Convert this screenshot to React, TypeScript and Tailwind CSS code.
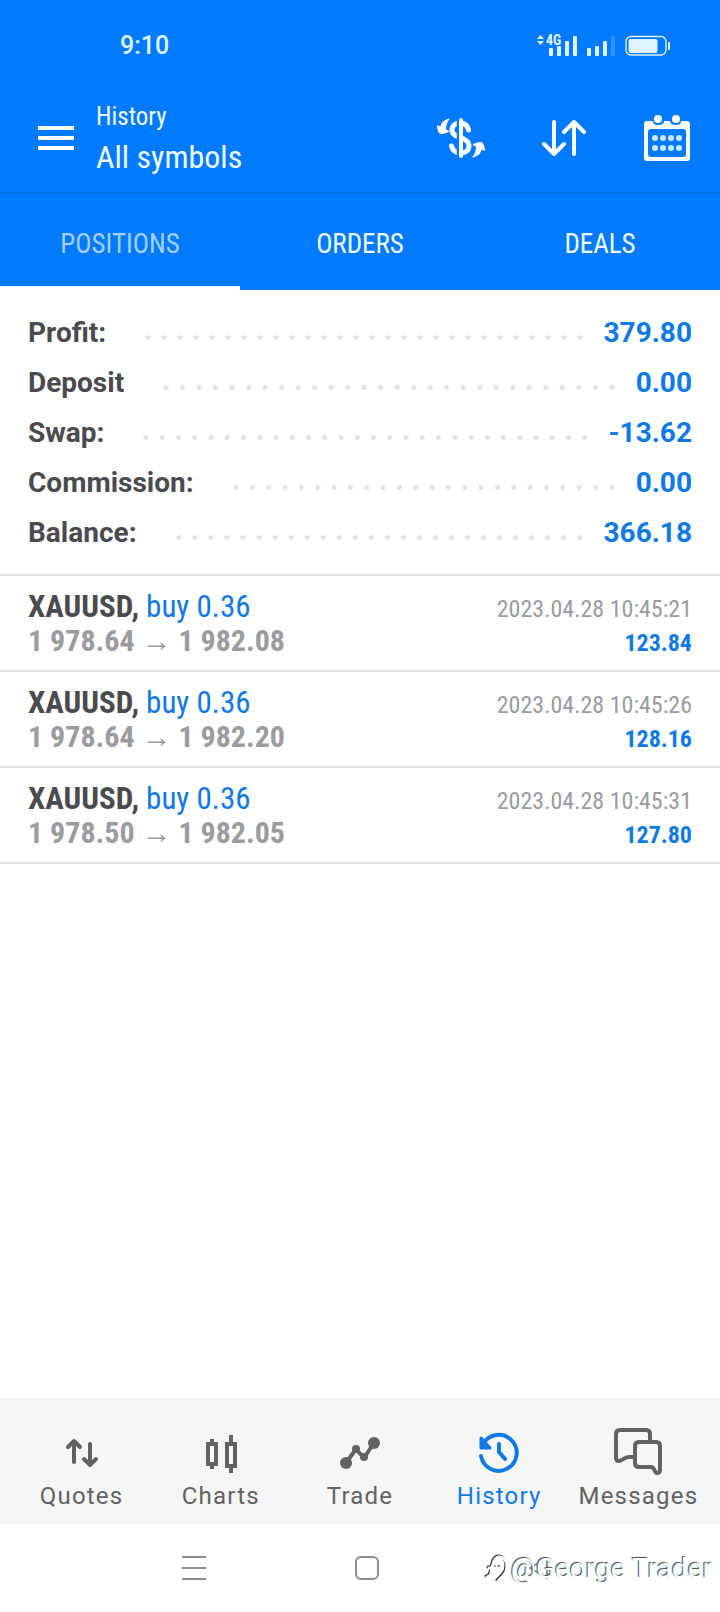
const condensed = "font-['Roboto_Condensed','Roboto',sans-serif]";

const summary = [
  { label: "Profit:", value: "379.80" },
  { label: "Deposit", value: "0.00" },
  { label: "Swap:", value: "-13.62" },
  { label: "Commission:", value: "0.00" },
  { label: "Balance:", value: "366.18" },
];

const positions = [
  { open: "1 978.64", close: "1 982.08", time: "2023.04.28 10:45:21", profit: "123.84" },
  { open: "1 978.64", close: "1 982.20", time: "2023.04.28 10:45:26", profit: "128.16" },
  { open: "1 978.50", close: "1 982.05", time: "2023.04.28 10:45:31", profit: "127.80" },
];

const StatusBar = () => (
  <div className="flex h-[92px] items-center justify-between pl-[120px] pr-[49px] text-[#e0f4ff]">
    <span className="font-['Roboto',sans-serif] text-[25px] font-medium">9:10</span>
    <svg viewBox="0 -4 134 32" className="h-8 w-[134px]" fill="currentColor" aria-hidden="true">
      <path d="M0 5 3.500 1 7 5zM0 7 3.500 11 7 7z" />
      <text x="9" y="11" fontSize="14" fontWeight="700" fontFamily="Roboto Condensed, Roboto, sans-serif">4G</text>
      <rect x="12" y="14" width="4" height="8" rx="1" />
      <rect x="20" y="12" width="4" height="10" rx="1" />
      <rect x="28" y="7" width="4" height="15" rx="1" />
      <rect x="36" y="2" width="4" height="20" rx="1" />
      <rect x="50" y="14" width="4" height="8" rx="1" />
      <rect x="58" y="12" width="4" height="10" rx="1" />
      <rect x="66" y="7" width="4" height="15" rx="1" />
      <rect x="74" y="2" width="4" height="20" rx="1" opacity=".2" />
      <rect x="89" y="2.500" width="40" height="18.500" rx="5" fill="none" stroke="currentColor" strokeWidth="1.400" />
      <rect x="91.500" y="5" width="29" height="14" rx="2" />
      <rect x="131" y="8" width="2" height="8" rx="1" />
    </svg>
  </div>
);

const Header = () => (
  <header className="flex h-[102px] items-center border-b-2 border-[#006fe6] pb-2 pl-[38px] pr-[30px]">
    <button type="button" aria-label="Menu" className="flex w-9 flex-col gap-1.5">
      <span className="h-1 bg-white" />
      <span className="h-1 bg-white" />
      <span className="h-1 bg-white" />
    </button>
    <div className={`ml-[22px] flex-1 pb-0.5 ${condensed}`}>
      <p className="text-[25px] leading-10">History</p>
      <h1 className="text-[32px] leading-10">All symbols</h1>
    </div>
    <div className="flex items-center gap-[56px] text-white">
      <button type="button" aria-label="Filter by symbol">
        <svg viewBox="0 0 50 50" className="size-[50px]" fill="none" stroke="currentColor" strokeWidth="5" strokeLinecap="round">
          <path d="M32.500 17c-1-4.500-4-7-8.500-7-4.500 0-8 2.500-8 7 0 4.500 4 6 8.500 7.500 4.500 1.500 8.500 3.500 8.500 8.500 0 4.500-3.500 7-8 7-5 0-8.500-2.500-9.500-7" />
          <path d="M22 5v40" stroke="#007aff" strokeWidth="2.500" strokeLinecap="butt" />
          <path d="M25 7v36" strokeWidth="4" />
          <path
            d="M14 5.500C8.500 6 5 9.500 4.500 13.500L1 12C1 17 3 21 5 21 8 21 12 20 13.500 18L10 16.500C10 12 11.500 8.500 14 5.500ZM36 44.500C41.500 44 45 40.500 45.500 36.500L49 38C49 33 47 29 45 29 42 29 38 30 36.500 32L40 33.500C40 38 38.500 41.500 36 44.500Z"
            fill="currentColor"
            stroke="none"
          />
        </svg>
      </button>
      <button type="button" aria-label="Sort">
        <svg viewBox="0 0 46 38" className="h-[38px] w-[46px]" fill="none" stroke="currentColor" strokeWidth="4" strokeLinecap="round" strokeLinejoin="round">
          <path d="M12 3v32M2 25l10 10 10-10M32 35V3M22 13 32 3l10 10" />
        </svg>
      </button>
      <button type="button" aria-label="Period">
        <svg viewBox="0 0 46 46" className="size-[46px]" fill="currentColor">
          <path fillRule="evenodd" d="M3 6h6c0 3 2 4 5 4s6-1 6-4h6c0 3 3 4 6 4s5-1 5-4h6q3 0 3 3v34q0 3-3 3H3q-3 0-3-3V9q0-3 3-3Zm4 8q-3 0-3 3v22q0 3 3 3h32q3 0 3-3V17q0-3-3-3Z" />
          <circle cx="14" cy="4" r="4" />
          <circle cx="32" cy="4" r="4" />
          <g className="text-[#c8e9ff]">
            {[11, 19, 27, 35].map((x) => (
              <g key={x}>
                <circle cx={x} cy="23" r="3" />
                <circle cx={x} cy="33" r="3" />
              </g>
            ))}
          </g>
        </svg>
      </button>
    </div>
  </header>
);

const Tabs = () => (
  <nav className={`grid h-24 grid-cols-3 text-[27px] ${condensed}`}>
    <button type="button" className="border-b-4 border-white pt-2 text-[#a6cfff]">POSITIONS</button>
    <button type="button" className="border-b-4 border-transparent pt-2">ORDERS</button>
    <button type="button" className="border-b-4 border-transparent pt-2">DEALS</button>
  </nav>
);

const Summary = () => (
  <dl className="border-b-2 border-[#e2e2e2] px-7 pt-[18px] pb-4 font-['Roboto',sans-serif] text-[28px] font-bold">
    {summary.map((row) => (
      <div key={row.label} className="flex h-[50px] items-center">
        <dt className="text-[#4a4a4f]">{row.label}</dt>
        <dd className="flex flex-1 items-center text-[#0f7ae5]">
          <span className="mt-2 mr-4 ml-[34px] h-[5px] flex-1 bg-[radial-gradient(circle,#e2e2e2_2px,transparent_3px)] bg-[length:16px_5px] bg-repeat-space" />
          {row.value}
        </dd>
      </div>
    ))}
  </dl>
);

const Positions = () => (
  <ul className={condensed}>
    {positions.map((p) => (
      <li key={p.time} className="flex h-24 items-center justify-between border-b-2 border-[#e2e2e2] px-7 pt-0.5">
        <div className="leading-[34px]">
          <p className="text-[31px] text-[#0f7ae5]">
            <b className="text-[#4a4a4f]">XAUUSD,</b> buy 0.36
          </p>
          <p className="text-[30px] font-bold text-[#9b9ba0]">
            {p.open} → {p.close}
          </p>
        </div>
        <div className="pt-1 text-right text-2xl leading-[34px]">
          <p className="text-[#9b9ba0]">{p.time}</p>
          <p className="font-bold text-[#0f7ae5]">{p.profit}</p>
        </div>
      </li>
    ))}
  </ul>
);

const navItems = [
  {
    label: "Quotes",
    icon: <path d="M17 36V16M11 21l6-6 6 6M33 18v20M27 33l6 6 6-6" strokeWidth="4" />,
  },
  {
    label: "Charts",
    icon: <path d="M12 18h8v20h-8zM16 13v4M16 39v4M31 18h8v22h-8zM35 9v8M35 41v6" strokeWidth="4" strokeLinecap="butt" strokeLinejoin="miter" />,
  },
  {
    label: "Trade",
    icon: (
      <>
        <path d="M11 37 21 23l8 9 10-15" strokeWidth="4" />
        <g fill="currentColor" stroke="none">
          <circle cx="11" cy="37" r="6" />
          <circle cx="21" cy="23" r="4" />
          <circle cx="29" cy="31" r="4" />
          <circle cx="39" cy="17" r="6" />
        </g>
      </>
    ),
  },
  {
    label: "History",
    active: true,
    icon: (
      <>
        <path d="M7 30A18 18 0 1 0 9 18M25 18v8l6 7" strokeWidth="4" />
        <path d="M7 12v10h9Z" fill="currentColor" strokeWidth="3" />
      </>
    ),
  },
  {
    label: "Messages",
    icon: <path d="M21 31h-5c-5 0-7 4-10 4q-3 0-3-3V8q0-4 4-4h26q4 0 4 4v8M26 16h17q4 0 4 4v24q0 3-3 3c-3 0-2-6-6-6H26q-4 0-4-4V20q0-4 4-4Z" strokeWidth="4" />,
  },
];

const BottomNav = () => (
  <nav className="grid h-[126px] grid-cols-5 bg-[#f6f6f7] px-3 font-['Roboto',sans-serif] text-2xl tracking-wider">
    {navItems.map((item) => (
      <a
        key={item.label}
        href="#"
        className={`flex flex-col items-center gap-0.5 pt-7 ${item.active ? "text-[#0f7ae5]" : "text-[#626262]"}`}
      >
        <svg viewBox="0 0 50 52" className="h-[52px] w-[50px]" fill="none" stroke="currentColor" strokeLinecap="round" strokeLinejoin="round">
          {item.icon}
        </svg>
        <span className="leading-8">{item.label}</span>
      </a>
    ))}
  </nav>
);

const SystemBar = () => (
  <div className="relative flex h-[88px] items-center justify-between pl-[182px] pr-[169px] text-[#8c8c8c]">
    <button type="button" aria-label="Recent apps">
      <svg viewBox="0 0 24 26" className="h-[26px] w-6" stroke="currentColor" strokeWidth="2">
        <path d="M0 2h24M0 13h24M0 24h24" />
      </svg>
    </button>
    <button type="button" aria-label="Home" className="size-6 rounded-md border-2" />
    <button type="button" aria-label="Back">
      <svg viewBox="0 0 24 24" className="size-6" fill="none" stroke="currentColor" strokeWidth="2" strokeLinejoin="round">
        <path d="M20 2v20L3 12Z" />
      </svg>
    </button>
    <div className="absolute right-2 bottom-[22px] flex items-center gap-0.5 font-['Roboto',sans-serif] text-[28px] text-white [text-shadow:-1px_-1px_1px_#444]">
      <svg viewBox="0 0 24 28" className="h-7 w-6 drop-shadow-[-1px_-1px_0.5px_#333]" fill="none" stroke="currentColor" strokeWidth="3" strokeLinecap="round">
        <path d="M2 22c4 0 4-4 5-9s2-10 7-11c5 0 8 4 8 9 0 7-4 10-9 15M4 13h7" />
        <circle cx="15" cy="12" r="1" fill="currentColor" stroke="none" />
      </svg>
      @George Trader
    </div>
  </div>
);

const App = () => (
  <div className="flex min-h-screen flex-col bg-white">
    <div className="bg-[#007aff] text-[#f0fbff]">
      <StatusBar />
      <Header />
      <Tabs />
    </div>
    <main className="flex-1">
      <Summary />
      <Positions />
    </main>
    <BottomNav />
    <SystemBar />
  </div>
);

export default App;
